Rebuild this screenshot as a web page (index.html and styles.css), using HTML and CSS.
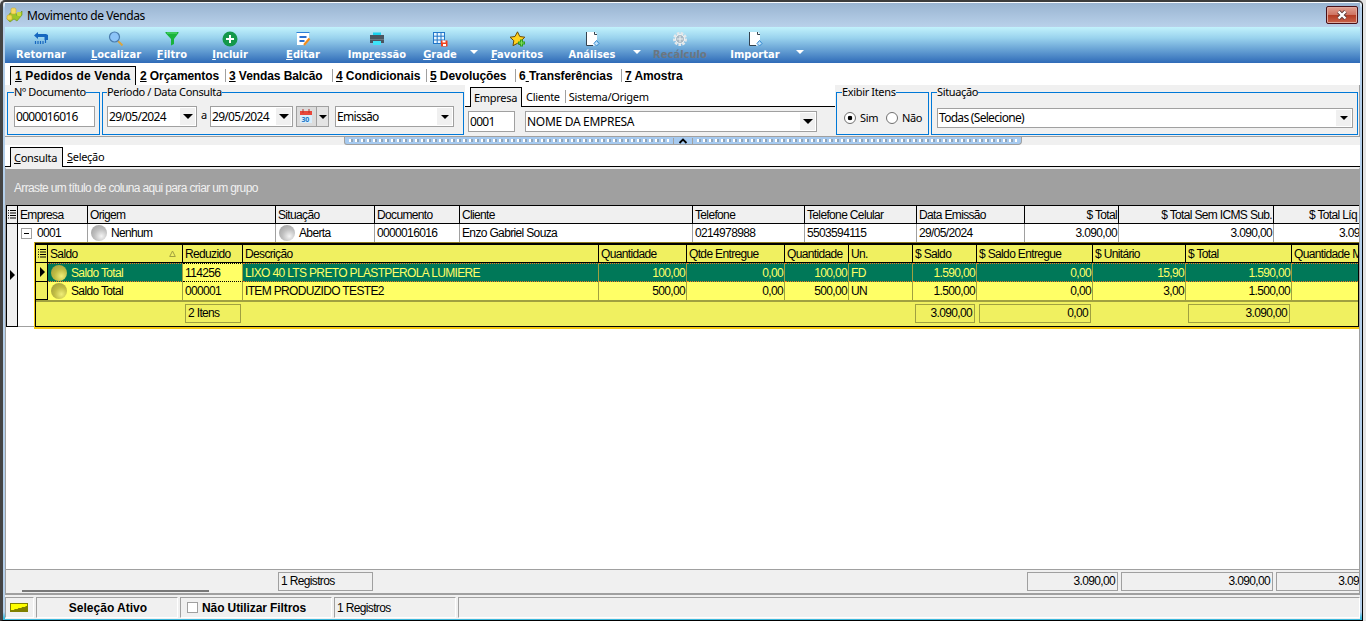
FILE: index.html
```html
<!DOCTYPE html>
<html lang="pt-BR">
  <head>
    <meta charset="UTF-8" />
    <meta name="viewport" content="width=device-width, initial-scale=1.0" />
    <title>Movimento de Vendas</title>

    <link rel="stylesheet" href="styles.css">
  </head>
  <body>
    <div class="window">
      <header class="titlebar">
        <svg class="app-icon" width="17" height="16" viewBox="0 0 17 16">
          <path d="M4 6h6l1 3 5-5v4l-5 6-3-2-4 3-3-3z" fill="#9cc628" stroke="#6b8f16" stroke-width=".6" />
          <rect x="5" y="1" width="5" height="6" rx="1.500" fill="#f6dc62" stroke="#c9a72c" stroke-width=".6" />
          <rect x="1" y="8" width="5" height="5" rx="1.500" fill="#f0d850" stroke="#c9a72c" stroke-width=".6" />
          <rect x="11" y="5" width="4" height="4" rx="1" fill="#c9dc3c" />
        </svg>
        <h1>Movimento de Vendas</h1>
        <button class="close" aria-label="Fechar">
          <svg width="12" height="10" viewBox="0 0 12 10">
            <path d="M2.500 1.500l7 7M9.500 1.500l-7 7" stroke="#5b3a3a" stroke-width="4" />
            <path d="M2.500 1.500l7 7M9.500 1.500l-7 7" stroke="#fff" stroke-width="2.400" />
          </svg>
        </button>
      </header>

      <nav class="toolbar">
        <a class="tool first">
          <svg width="16" height="16" viewBox="0 0 16 16"><path d="M5 1L1 4.500 5 8V6h6.500v3H15V4l-2-1H5z" fill="#1667c0" /><path d="M2.500 10v3M5 10v3M7.500 10v3M10 10v3M12.500 9v3" stroke="#1667c0" stroke-width="1.200" /></svg>
          <span>Retornar</span>
        </a>
        <a class="tool">
          <svg width="16" height="16" viewBox="0 0 16 16"><path d="M10 10l4.500 4.500" stroke="#d9a441" stroke-width="2" /><circle cx="6.500" cy="6" r="5" fill="#8cc4f8" stroke="#4a7cae" stroke-width="1.200" /></svg>
          <span><u>L</u>ocalizar</span>
        </a>
        <a class="tool">
          <svg width="16" height="16" viewBox="0 0 16 16"><path d="M1.500 1h13v1L10 8v5l-3 1.500V8L1.500 2z" fill="#19b33c" /><path d="M3 2h10" stroke="#5fe07a" /></svg>
          <span><u>F</u>iltro</span>
        </a>
        <a class="tool">
          <svg width="16" height="16" viewBox="0 0 16 16"><circle cx="8" cy="8" r="7.500" fill="#14984a" /><path d="M8 4v8M4 8h8" stroke="#fff" stroke-width="2" /></svg>
          <span><u>I</u>ncluir</span>
        </a>
        <a class="tool">
          <svg width="16" height="16" viewBox="0 0 16 16"><path d="M2 1.500h12V9l-4 5H2z" fill="#fff" /><path d="M1.500 1.500h13" stroke="#2a7fd8" /><path d="M4.500 6h7M4.500 10h5" stroke="#2a6fd0" stroke-width="2" /><path d="M14.500 7.500L9 14" stroke="#f08b1d" stroke-width="2.200" /></svg>
          <span><u>E</u>ditar</span>
        </a>
        <a class="tool">
          <svg width="16" height="16" viewBox="0 0 16 16"><rect x="4" y="1.500" width="8" height="4" fill="#19d0ee" /><rect x="1" y="4" width="14" height="8" fill="#4a5560" /><rect x="1" y="8" width="14" height="1" fill="#6b7782" /><rect x="4" y="10" width="8" height="4" fill="#3ee3f8" /></svg>
          <span>Imp<u>r</u>essão</span>
        </a>
        <a class="tool">
          <svg width="16" height="16" viewBox="0 0 16 16"><rect x="1.500" y="1.500" width="11" height="11" fill="#eaf6ff" stroke="#2176c9" /><path d="M5.200 1v12M9 1v12M1 5.200h12M1 9h12" stroke="#2176c9" /><rect x="9" y="9.500" width="6.500" height="6" fill="#f0401c" /><rect x="10.500" y="9.500" width="3" height="2" fill="#fff" /><rect x="11" y="13" width="3" height="2" fill="#fff" /></svg>
          <span><u>G</u>rade</span>
        </a>
        <i class="more"></i>
        <a class="tool">
          <svg width="18" height="17" viewBox="0 0 18 17"><path d="M9.500.8l2.300 4.700 5 .7-3.600 3.500.9 5-4.600-2.400-4.500 2.400.8-5L2 6.200l5-.7z" fill="#ffd21f" stroke="#6b4a08" /><path d="M13.500 8.500v7M10 12h7" stroke="#2f9e1e" stroke-width="3" /><path d="M13.500 9.500v5M11 12h5" stroke="#7fdc5c" /></svg>
          <span><u>F</u>avoritos</span>
        </a>
        <a class="tool">
          <svg width="16" height="16" viewBox="0 0 16 16"><path d="M2.500 1H11l2 2v11.500H2.500z" fill="#fff" /><path d="M2.500 1v13.500H9M10.500 1v2.500H13" fill="none" stroke="#34424e" /><path d="M12.500 9.500l2.500 3-2.500 2.500-2.500-2.500z" fill="#bfe2fb" stroke="#2f86cf" /></svg>
          <span>Análises</span>
        </a>
        <i class="more shift"></i>
        <a class="tool off">
          <svg width="16" height="16" viewBox="0 0 16 16"><circle cx="8" cy="8" r="5.500" fill="none" stroke="#e4e8ea" stroke-width="3" stroke-dasharray="2.500 1.200" /><circle cx="8" cy="8" r="4.500" fill="#a9bac5" stroke="#f3f5f6" /><path d="M5 8h6M8 5v6" stroke="#eef1f2" /></svg>
          <span>Recálculo</span>
        </a>
        <a class="tool">
          <svg width="16" height="16" viewBox="0 0 16 16"><path d="M2.500 1H11l2 2v11.500H2.500z" fill="#fff" /><path d="M2.500 1v13.500H9M10.500 1v2.500H13" fill="none" stroke="#34424e" /><path d="M12.500 9.500l2.500 3-2.500 2.500-2.500-2.500z" fill="#bfe2fb" stroke="#2f86cf" /></svg>
          <span>Importar</span>
        </a>
        <i class="more shift"></i>
      </nav>

      <ul class="main-tabs">
        <li class="active"><u>1</u> Pedidos de Venda</li>
        <li><u>2</u> Orçamentos</li>
        <li><u>3</u> Vendas Balcão</li>
        <li><u>4</u> Condicionais</li>
        <li><u>5</u> Devoluções</li>
        <li>6<u>&nbsp;</u>Transferências</li>
        <li><u>7</u> Amostra</li>
      </ul>

      <section class="filters">
        <fieldset class="box doc">
          <legend>Nº Documento</legend>
          <div class="input doc-input">0000016016</div>
        </fieldset>
        <fieldset class="box period">
          <legend>Período / Data Consulta</legend>
          <div class="line">
            <div class="input date">29/05/2024<i class="drop"></i></div>
            <span class="until">a</span>
            <div class="input date second">29/05/2024<i class="drop"></i></div>
            <div class="calendar">
              <svg width="14" height="15" viewBox="0 0 14 15"><rect x="1" y="2" width="12" height="12" fill="#d9edfb" /><rect x="1" y="2" width="12" height="4" fill="#e8473c" /><path d="M4 0v4M10 0v4" stroke="#b7352c" /><text x="2.500" y="13" font-size="7" font-weight="bold" fill="#1c77c8">30</text></svg>
              <i class="drop"></i>
            </div>
            <div class="input kind">Emissão<i class="drop"></i></div>
          </div>
        </fieldset>
        <div class="company">
          <ul class="sub-tabs">
            <li class="active">Empresa</li>
            <li>Cliente</li>
            <li>Sistema/Origem</li>
          </ul>
          <div class="line">
            <div class="input code">0001</div>
            <div class="input name">NOME DA EMPRESA<i class="drop"></i></div>
          </div>
        </div>
        <fieldset class="box show-items">
          <legend>Exibir Itens</legend>
          <div class="line">
            <i class="radio on"></i><span>Sim</span>
            <i class="radio"></i><span>Não</span>
          </div>
        </fieldset>
        <fieldset class="box status">
          <legend>Situação</legend>
          <div class="input status-input">Todas (Selecione)<i class="drop"></i></div>
        </fieldset>
      </section>

      <div class="splitter">
        <div class="handle">
          <i class="dots"></i>
          <svg width="18" height="6" viewBox="0 0 18 6"><path d="M5.500 5L9 1.500 12.500 5" fill="none" stroke="#000" stroke-width="1.800" /></svg>
          <i class="dots"></i>
        </div>
      </div>

      <ul class="sub-tabs view-tabs">
        <li class="active"><u>C</u>onsulta</li>
        <li><u>S</u>eleção</li>
      </ul>

      <main class="grid">
        <div class="group-panel">Arraste um título de coluna aqui para criar um grupo</div>

        <div class="cols head">
          <div class="mark"><svg width="8" height="9" viewBox="0 0 8 9"><path d="M0 .5h1M2 .5h6M0 3h1M2 3h6M0 5.500h1M2 5.500h6M0 8h1M2 8h6" stroke="#000" /></svg></div>
          <div>Empresa</div>
          <div>Origem</div>
          <div>Situação</div>
          <div>Documento</div>
          <div>Cliente</div>
          <div>Telefone</div>
          <div>Telefone Celular</div>
          <div>Data Emissão</div>
          <div class="num">$ Total</div>
          <div class="num">$ Total Sem ICMS Sub.</div>
          <div class="cut">$ Total Líq</div>
        </div>

        <div class="record">
          <div class="record-mark"><i class="pointer"></i></div>
          <div class="record-body">
            <div class="cols row">
              <div><i class="minus"></i>0001</div>
              <div><i class="ball"></i>Nenhum</div>
              <div><i class="ball"></i>Aberta</div>
              <div>0000016016</div>
              <div>Enzo Gabriel Souza</div>
              <div>0214978988</div>
              <div>5503594115</div>
              <div>29/05/2024</div>
              <div class="num">3.090,00</div>
              <div class="num">3.090,00</div>
              <div class="cut value">3.09</div>
            </div>

            <div class="detail">
              <div class="dcols dhead">
                <div class="mark"><svg width="8" height="9" viewBox="0 0 8 9"><path d="M0 .5h1M2 .5h6M0 3h1M2 3h6M0 5.500h1M2 5.500h6M0 8h1M2 8h6" stroke="#000" /></svg></div>
                <div class="sorted">Saldo<svg width="7" height="7" viewBox="0 0 7 7"><path d="M3.500 1L6.300 6.500H.7z" fill="none" stroke="#a0a040" /></svg></div>
                <div>Reduzido</div>
                <div>Descrição</div>
                <div>Quantidade</div>
                <div>Qtde Entregue</div>
                <div>Quantidade</div>
                <div>Un.</div>
                <div>$ Saldo</div>
                <div>$ Saldo Entregue</div>
                <div>$ Unitário</div>
                <div>$ Total</div>
                <div>Quantidade M</div>
              </div>
              <div class="dcols drow selected">
                <div class="mark"><i class="pointer"></i></div>
                <div><i class="ball"></i>Saldo Total</div>
                <div class="focus">114256</div>
                <div>LIXO 40 LTS PRETO PLASTPEROLA LUMIERE</div>
                <div class="num">100,00</div>
                <div class="num">0,00</div>
                <div class="num">100,00</div>
                <div>FD</div>
                <div class="num">1.590,00</div>
                <div class="num">0,00</div>
                <div class="num">15,90</div>
                <div class="num">1.590,00</div>
                <div></div>
              </div>
              <div class="dcols drow last">
                <div class="mark"></div>
                <div><i class="ball"></i>Saldo Total</div>
                <div>000001</div>
                <div>ITEM PRODUZIDO TESTE2</div>
                <div class="num">500,00</div>
                <div class="num">0,00</div>
                <div class="num">500,00</div>
                <div>UN</div>
                <div class="num">1.500,00</div>
                <div class="num">0,00</div>
                <div class="num">3,00</div>
                <div class="num">1.500,00</div>
                <div></div>
              </div>
              <div class="dcols dfoot">
                <div class="sum items">2 Itens</div>
                <div class="sum saldo">3.090,00</div>
                <div class="sum delivered">0,00</div>
                <div class="sum total">3.090,00</div>
              </div>
            </div>
          </div>
        </div>

        <div class="grid-foot">
          <div class="scroll"></div>
          <div class="sum count">1 Registros</div>
          <div class="sum right">3.090,00</div>
          <div class="sum right wide">3.090,00</div>
          <div class="sum right cropped">3.09</div>
        </div>
      </main>

      <footer class="statusbar">
        <div class="pane"><i class="led"></i></div>
        <div class="pane strong">Seleção Ativo</div>
        <div class="pane strong check"><i class="checkbox"></i>Não Utilizar Filtros</div>
        <div class="pane">1 Registros</div>
        <div class="pane"></div>
      </footer>
    </div>
  </body>
</html>
```

FILE: styles.css
```css
/* ------ */
/* General Styling */
* {
  margin: 0;
  padding: 0;
  box-sizing: border-box;
}
body {
  width: 1366px;
  height: 621px;
  overflow: hidden;
  background-color: #e4e4e4;
  font-family: "Liberation Sans", Arial, sans-serif;
  font-size: 12px;
  letter-spacing: -0.65px;
  color: black;
  white-space: nowrap;
}

ul {
  list-style: none;
}

svg {
  display: block;
  flex: none;
}

i {
  display: block;
  flex: none;
}

.window {
  width: 1363px;
  height: 621px;
  border-style: solid;
  border-width: 2px 1px 1px 3px;
  border-color: #3c3c3c black black #444;
  border-radius: 5px 5px 0 0;
  padding: 1px 2px 1px 2px;
  background: linear-gradient(#fff 0, #b4cfea 6px, #b4cfea 610px, #3cb8dc 616px);
  display: flex;
  flex-direction: column;
}
/* ------ */

/* Title bar */
.titlebar {
  height: 24px;
  flex: none;
  display: flex;
  align-items: center;
  background: linear-gradient(#99b4d1, #b9d1ea);
}

.app-icon {
  margin: 0 4px 0 1px;
}

.titlebar h1 {
  flex: 1;
  font: 12px "Noto Sans", sans-serif;
  letter-spacing: -0.4px;
}

.close {
  width: 32px;
  height: 18px;
  margin-right: 2px;
  border: 1px solid #4a1018;
  border-radius: 2px;
  box-shadow: inset 0 0 0 1px #e0a99c;
  background: linear-gradient(#e0a091 0, #cf7463 48%, #b23a22 50%, #c9644c);
  display: flex;
  align-items: center;
  justify-content: center;
}

/* Toolbar */
.toolbar {
  height: 36px;
  flex: none;
  display: grid;
  grid-template-columns: 80px 62px 50px 66px 80px 68px 58px 10px 76px 74px 13px 76px 74px 14px;
  background: linear-gradient(#c2f2fc, #9ad3ee 30%, #2f6bb8);
}

.tool {
  display: flex;
  flex-direction: column;
  align-items: center;
  padding-top: 4px;
  font: bold 11px/14px "DejaVu Sans Condensed", "DejaVu Sans", sans-serif;
  letter-spacing: 0.05px;
  color: white;
}

.tool span {
  margin-top: auto;
  padding-bottom: 2px;
}

.tool.first {
  padding-right: 8px;
}

.tool.off {
  color: #6c7680;
}

.more {
  align-self: center;
  margin: 12px 0 0 1px;
  border: 4px solid transparent;
  border-top-color: white;
  border-bottom: 0;
  width: 8px;
}

.more.shift {
  margin-left: 4px;
}

/* Tabs */
.main-tabs {
  height: 22px;
  flex: none;
  padding: 3px 0 0 5px;
  background-color: white;
  display: grid;
  grid-template-columns: 126px 89px 107px 94px 89px 106px 80px;
  font-weight: bold;
  letter-spacing: -0.08px;
  line-height: 20px;
}

.main-tabs li {
  padding-left: 4px;
}

.main-tabs li + li + li {
  background: linear-gradient(#a0a0a0, #a0a0a0) 0 3px / 1px 13px no-repeat;
}

.main-tabs .active {
  border: 1px solid black;
  border-bottom: 0;
  background-color: #f0f0f0;
  letter-spacing: 0.15px;
  line-height: 18px;
}

.sub-tabs {
  height: 22px;
  background-color: white;
  border-bottom: 1px solid black;
  display: flex;
  align-items: flex-end;
  font: 11px/19px "Noto Sans", sans-serif;
  letter-spacing: -0.3px;
}

.sub-tabs li {
  height: 19px;
  padding: 0 4px;
}

.sub-tabs .active {
  height: 20px;
  margin-bottom: -1px;
  padding: 0 3px;
  border: 1px solid black;
  border-bottom: 0;
  background-color: #f0f0f0;
}

/* Filters */
.filters {
  height: 52px;
  flex: none;
  display: flex;
  padding-left: 2px;
  background-color: #f0f0f0;
  border-bottom: 1px solid #a0a0a0;
  border-right: 1px solid #a0a0a0;
  font: 11px "Noto Sans", sans-serif;
  letter-spacing: -0.35px;
}

.box {
  height: 50px;
  min-width: 0;
  border: 1px solid #0078d7;
  padding-left: 5px;
}

.box legend {
  height: 14px;
  line-height: 14px;
}

.line {
  display: flex;
}

.input {
  height: 21px;
  margin-top: 7px;
  padding: 1px;
  border: 1px solid #a0a0a0;
  background-color: white;
  display: flex;
  justify-content: space-between;
  font-size: 12px;
  letter-spacing: -0.7px;
  line-height: 17px;
}

.drop {
  width: 15px;
  background-color: #f0f0f0;
  display: flex;
  align-items: center;
  justify-content: center;
}

.drop::before {
  content: "";
  border: 5px solid transparent;
  border-top-color: black;
  border-bottom: 0;
}

.doc {
  width: 93px;
  margin-right: 2px;
  padding-left: 6px;
}

.doc-input {
  width: 81px;
}

.period {
  width: 362px;
  padding-left: 4px;
}

.date {
  width: 90px;
}

.date.second {
  width: 83px;
}

.until {
  width: 13px;
  padding: 8px 0 0 4px;
}

.calendar {
  width: 33px;
  height: 21px;
  margin: 7px 6px 0 3px;
  border: 1px solid #a0a0a0;
  background-color: #dcdcdc;
  display: flex;
  align-items: center;
}

.calendar svg {
  margin: 0 2px;
}

.calendar .drop {
  align-self: stretch;
  margin-left: 1px;
  width: 12px;
  background: #e4e4e4;
  border-left: 1px solid #a0a0a0;
}

.calendar .drop::before {
  border-width: 4px 4px 0;
}

.kind {
  width: 119px;
}

.kind .drop::before,
.status .drop::before {
  border-width: 4px 4px 0;
}

.company {
  width: 370px;
  margin: 0 1px;
}

.company .sub-tabs {
  padding-left: 5px;
}

.company .sub-tabs .active {
  width: 52px;
}

.company .sub-tabs li + li {
  padding: 0 5px 0 4px;
}

.company .sub-tabs li + li + li {
  background: linear-gradient(#a0a0a0, #a0a0a0) 0 3px / 1px 13px no-repeat;
}

.company .input {
  margin-top: 4px;
}

.code {
  width: 47px;
  margin: 0 10px 0 3px;
}

.name {
  width: 292px;
  letter-spacing: -0.3px;
}

.show-items {
  width: 93px;
  margin-right: 2px;
}

.show-items .line {
  padding: 11px 0 0 2px;
  line-height: 16px;
}

.show-items span {
  width: 30px;
  padding-left: 4px;
}

.radio {
  width: 12px;
  height: 12px;
  margin-top: 2px;
  border: 1px solid #707070;
  border-radius: 50%;
  background-color: white;
}

.radio.on {
  background: radial-gradient(circle, black 2px, white 2.6px);
}

.status {
  width: 427px;
}

.status-input {
  width: 416px;
  height: 20px;
  margin-top: 9px;
  line-height: 16px;
}

/* Splitter */
.splitter {
  height: 8px;
  flex: none;
  padding-left: 339px;
  background-color: #f0f0f0;
}

.handle {
  width: 678px;
  height: 8px;
  display: flex;
  justify-content: space-between;
  align-items: center;
  background-color: #a6caf0;
  border: 1px solid #a0a0a0;
  border-top: 0;
  border-radius: 0 0 4px 3px;
}

.handle svg {
  width: 20px;
  border: solid #a0a0a0;
  border-width: 0 1px;
}

.dots {
  width: 320px;
  height: 3px;
  margin: 0 4px;
  background: repeating-linear-gradient(90deg, #fff 0 2px, #8fa4b8 2px 4px, #a6caf0 4px 6px);
}

.view-tabs {
  flex: none;
  padding-left: 5px;
}

.view-tabs .active {
  width: 53px;
}

/* Data grid */
.grid {
  height: 428px;
  flex: none;
  overflow: hidden;
  display: flex;
  flex-direction: column;
  background-color: white;
  border-top: 2px solid #f0f0f0;
  border-left: 1px solid #a0a0a0;
  border-right: 1px solid #a0a0a0;
}

.group-panel {
  height: 36px;
  flex: none;
  padding-left: 8px;
  background-color: #a0a0a0;
  color: #f0f0f0;
  line-height: 38px;
}

.cols {
  display: grid;
  grid-template-columns: 70px 188px 99px 85px 233px 112px 112px 108px 94px 155px 1fr;
  line-height: 18px;
}

.cols > div,
.dcols > div {
  min-width: 0;
  padding-left: 2px;
  border-right: 1px solid #a0a0a0;
  overflow: hidden;
  display: flex;
  align-items: center;
}

.head {
  height: 19px;
  flex: none;
  grid-template-columns: 11px 70px 188px 99px 85px 233px 112px 112px 108px 94px 155px 1fr;
  border: 1px solid black;
  border-right: 0;
  background-color: #f0f0f0;
}

.head > div {
  border-right-color: black;
}

.head .mark {
  padding-left: 1px;
}

.cols .num,
.dcols .num {
  justify-content: flex-end;
  padding-right: 1px;
}

.cols .cut {
  padding-left: 35px;
  border-right: 0;
}

.cols .cut.value {
  padding-left: 65px;
}

.record {
  height: 103px;
  flex: none;
  display: flex;
}

.record-mark {
  width: 12px;
  border: 1px solid black;
  border-top: 0;
  background-color: #f0f0f0;
  display: flex;
  align-items: center;
  padding-left: 3px;
}

.pointer {
  border: 5px solid transparent;
  border-left-color: black;
  border-right: 0;
}

.record-body {
  flex: 1;
  min-width: 0;
  border-bottom: 1px solid #a0a0a0;
}

.record-body .row {
  height: 18px;
}

.minus {
  width: 11px;
  height: 11px;
  margin: 0 5px 0 1px;
  border: 1px solid #a0a0a0;
  background: linear-gradient(black, black) center / 5px 1px no-repeat;
}

.ball {
  width: 16px;
  height: 16px;
  margin: 0 4px 0 1px;
  border-radius: 50%;
  background: radial-gradient(circle at 65% 70%, #f4f4f4, #c0c0c0 45%, #989898);
}

/* Items of the order */
.detail {
  height: 87px;
  margin-left: 16px;
  border: 1px solid #f2c811;
  border-top-color: #8c7a20;
  border-width: 1px 0 2px 1px;
  box-shadow: inset 1px 2px black, inset -1px -1px black;
  padding: 2px 1px 1px 1px;
  background-color: #f0f060;
}

.dcols {
  display: grid;
  grid-template-columns: 12px 135px 60px 356px 88px 98px 64px 64px 64px 116px 93px 106px 1fr;
}

.dhead {
  height: 18px;
  border-bottom: 1px solid black;
}

.dhead > div {
  border-right-color: black;
}

.sorted svg {
  margin: 0 6px 0 auto;
}

.drow {
  height: 19px;
  background-color: #ffff66;
}

.drow > div {
  border-right-color: #a0a040;
}

.dcols .mark {
  border-right-color: black;
  background-color: #f0f060;
}

.drow .mark {
  padding-left: 4px;
}

.drow > div:last-child,
.dhead > div:last-child {
  border-right: 0;
}

.selected > div {
  background-color: #007858;
  color: #ffff66;
  border-top: 1px dotted #f07820;
  border-bottom: 1px dotted #f07820;
}

.selected .mark {
  border-top: 0;
  border-bottom: 1px solid black;
}

.selected .focus {
  background-color: #ffff66;
  color: black;
  border-top-color: black;
  border-bottom-color: black;
}

.drow .ball {
  background: radial-gradient(circle at 65% 70%, #f0ee78, #c0bc44 45%, #98943c);
}

.drow.last {
  height: 18px;
}

.last .mark {
  border-bottom: 1px solid black;
}

.sum {
  height: 19px;
  border: 1px solid #a0a0a0;
  padding: 0 2px;
  line-height: 17px;
}

.dfoot {
  height: 26px;
  padding-top: 2px;
  border-top: 2px solid #a0a040;
}

.dfoot .sum {
  border-color: #a0a040;
  margin: 0 2px;
  justify-content: flex-end;
}

.dfoot .items {
  grid-column: 3;
  justify-content: flex-start;
  margin: 0 2px;
}

.dfoot .saldo {
  grid-column: 9;
}

.dfoot .delivered {
  grid-column: 10;
}

.dfoot .total {
  grid-column: 12;
}

/* Grid footer */
.grid-foot {
  height: 26px;
  flex: none;
  margin-top: auto;
  padding-top: 2px;
  border-top: 1px solid #a0a0a0;
  border-bottom: 2px solid #a0a0a0;
  background-color: #f0f0f0;
  display: flex;
}

.grid-foot > div {
  flex: none;
}

.scroll {
  width: 187px;
  height: 2px;
  margin: 18px 69px 0 16px;
  background-color: #787878;
}

.count {
  width: 95px;
}

.right {
  width: 91px;
  margin-left: 654px;
  text-align: right;
}

.right.wide {
  width: 152px;
  margin-left: 3px;
}

.right.cropped {
  width: 83px;
  margin-left: 3px;
  padding: 0;
  border-right: 0;
}

/* Status bar */
.statusbar {
  flex: 1;
  padding-top: 2px;
  background-color: #f0f0f0;
  display: grid;
  grid-template-columns: 29px 142px 152px 122px 1fr;
  column-gap: 2px;
}

.pane {
  height: 21px;
  border: 1px solid white;
  border-top-color: #a0a0a0;
  border-left-color: #a0a0a0;
  padding-left: 2px;
  display: flex;
  align-items: center;
}

.strong {
  font-weight: bold;
  letter-spacing: 0;
  justify-content: center;
}

.check {
  justify-content: flex-start;
  padding-left: 6px;
  letter-spacing: -0.1px;
}

.checkbox {
  width: 11px;
  height: 11px;
  margin-right: 4px;
  border: 1px solid #a0a0a0;
  background-color: white;
}

.led {
  width: 18px;
  height: 9px;
  margin-left: 2px;
  border: 1px solid #808000;
  background: linear-gradient(165deg, #ffff00 55%, #808000 58%);
}
```
